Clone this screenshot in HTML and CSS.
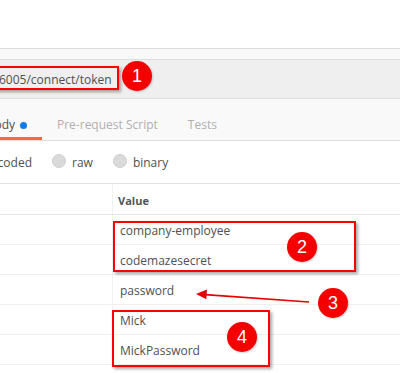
FILE: index.html
```html
<!DOCTYPE html>
<html lang="en">
<head>
    <meta charset="UTF-8">
    <title>Token request - body</title>
    <link rel="stylesheet" href="styles.css">
</head>
<body>
    <div class="shot">
        <div class="top"></div>
        <div class="strip"></div>

        <div class="url-bar">
            <span class="url-text">6005/connect/token</span>
        </div>

        <nav class="tabs">
            <div class="tab tab-active">
                <span>Body</span><span class="dot"></span>
            </div>
            <div class="tab">Pre-request Script</div>
            <div class="tab">Tests</div>
        </nav>

        <div class="radios">
            <div class="opt opt-cut">
                <span class="radio"></span><span>x-www-form-urlencoded</span>
            </div>
            <div class="opt"><span class="radio"></span><span>raw</span></div>
            <div class="opt"><span class="radio"></span><span>binary</span></div>
        </div>

        <div class="table">
            <div class="row head">
                <div class="cell key"></div>
                <div class="cell val">Value</div>
            </div>
            <div class="row">
                <div class="cell key"></div>
                <div class="cell val">company-employee</div>
            </div>
            <div class="row">
                <div class="cell key"></div>
                <div class="cell val">codemazesecret</div>
            </div>
            <div class="row">
                <div class="cell key"></div>
                <div class="cell val">password</div>
            </div>
            <div class="row">
                <div class="cell key"></div>
                <div class="cell val">Mick</div>
            </div>
            <div class="row">
                <div class="cell key"></div>
                <div class="cell val">MickPassword</div>
            </div>
        </div>

        <!-- annotations drawn over the screenshot -->
        <div class="mark mark-url"></div>
        <div class="mark mark-client"></div>
        <div class="mark mark-user"></div>

        <svg class="arrow" width="400" height="373" viewBox="0 0 400 373">
            <line x1="309" y1="302" x2="205" y2="294.6" stroke="#e60000" stroke-width="1.6"/>
            <polygon points="196,294 207,289.5 206.3,299.2" fill="#e60000"/>
        </svg>

        <div class="badge badge-1">1</div>
        <div class="badge badge-2">2</div>
        <div class="badge badge-3">3</div>
        <div class="badge badge-4">4</div>
    </div>
</body>
</html>
```

FILE: styles.css
```css
body {
    margin: 0;
    font-family: 'Open Sans', 'Liberation Sans', sans-serif;
    font-size: 12px;
    color: #505050;
    background-color: #ffffff;
}

.shot {
    position: relative;
    width: 400px;
    height: 373px;
    overflow: hidden;
}

.top {
    height: 48px;
    background-color: #ffffff;
    border-bottom: 1px solid #dcdcdc;
}

.strip {
    height: 10px;
    background-color: #f9f9f9;
    border-bottom: 1px solid #dcdcdc;
}

.url-bar {
    display: flex;
    align-items: center;
    height: 38px;
    background-color: #efefef;
    border-bottom: 1px solid #dcdcdc;
}

.url-text {
    margin-left: -1px;
    padding-top: 1px;
}

.tabs {
    display: flex;
    background-color: #f9f9f9;
    border-bottom: 1px solid #dddddd;
}

.tab {
    display: flex;
    align-items: center;
    white-space: nowrap;
    padding: 17px 15px 3px;
    line-height: 18px;
    border-bottom: 3px solid transparent;
    color: #b0b0b0;
}

.tab-active {
    flex-shrink: 0;
    width: 27px;
    justify-content: flex-end;
    overflow: hidden;
    padding-left: 0;
    color: #505050;
    border-bottom-color: #f26b3a;
}

.dot {
    flex-shrink: 0;
    width: 7px;
    height: 7px;
    margin-left: 5px;
    border-radius: 50%;
    background-color: #0f7bec;
}

.radios {
    display: flex;
    align-items: center;
    gap: 20px;
    height: 42px;
    border-bottom: 1px solid #e2e2e2;
}

.opt {
    display: flex;
    align-items: center;
    gap: 6px;
    white-space: nowrap;
    flex-shrink: 0;
    padding-top: 1px;
}

.opt-cut {
    width: 32px;
    justify-content: flex-end;
    overflow: hidden;
}

.radio {
    flex-shrink: 0;
    width: 12px;
    height: 12px;
    margin-top: -4px;
    border-radius: 50%;
    background-color: #dadada;
    border: 1px solid #cfcfcf;
}

.row {
    display: flex;
    height: 29px;
    border-bottom: 1px solid #f0f0f0;
}

.row.head {
    height: 30px;
    border-bottom-color: #e4e4e4;
}

.cell {
    display: flex;
    align-items: center;
}

.key {
    width: 112px;
    border-right: 1px solid #f0f0f0;
}

.val {
    padding-left: 7px;
    padding-top: 2px;
}

.head .val {
    font-size: 11px;
    font-weight: bold;
    color: #555555;
    padding-left: 5px;
}

.mark {
    position: absolute;
    border: 2px solid #ff0000;
    box-shadow: 2px 2px 3px rgba(0, 0, 0, 0.35);
}

.mark-url {
    left: -10px;
    top: 66px;
    width: 125px;
    height: 20px;
}

.mark-client {
    left: 113px;
    top: 221px;
    width: 239px;
    height: 47px;
}

.mark-user {
    left: 112px;
    top: 310px;
    width: 154px;
    height: 53px;
}

.arrow {
    position: absolute;
    left: 0;
    top: 0;
}

.badge {
    position: absolute;
    width: 30px;
    height: 30px;
    border-radius: 50%;
    background-color: #f50000;
    color: #ffffff;
    font-family: 'Liberation Sans', Arial, sans-serif;
    font-size: 18px;
    line-height: 30px;
    text-align: center;
    box-shadow: 1px 1px 2px rgba(0, 0, 0, 0.2);
}

.badge-1 {
    left: 122px;
    top: 61px;
}

.badge-2 {
    left: 287px;
    top: 232px;
}

.badge-3 {
    left: 318px;
    top: 288px;
}

.badge-4 {
    left: 227px;
    top: 322px;
}
```
